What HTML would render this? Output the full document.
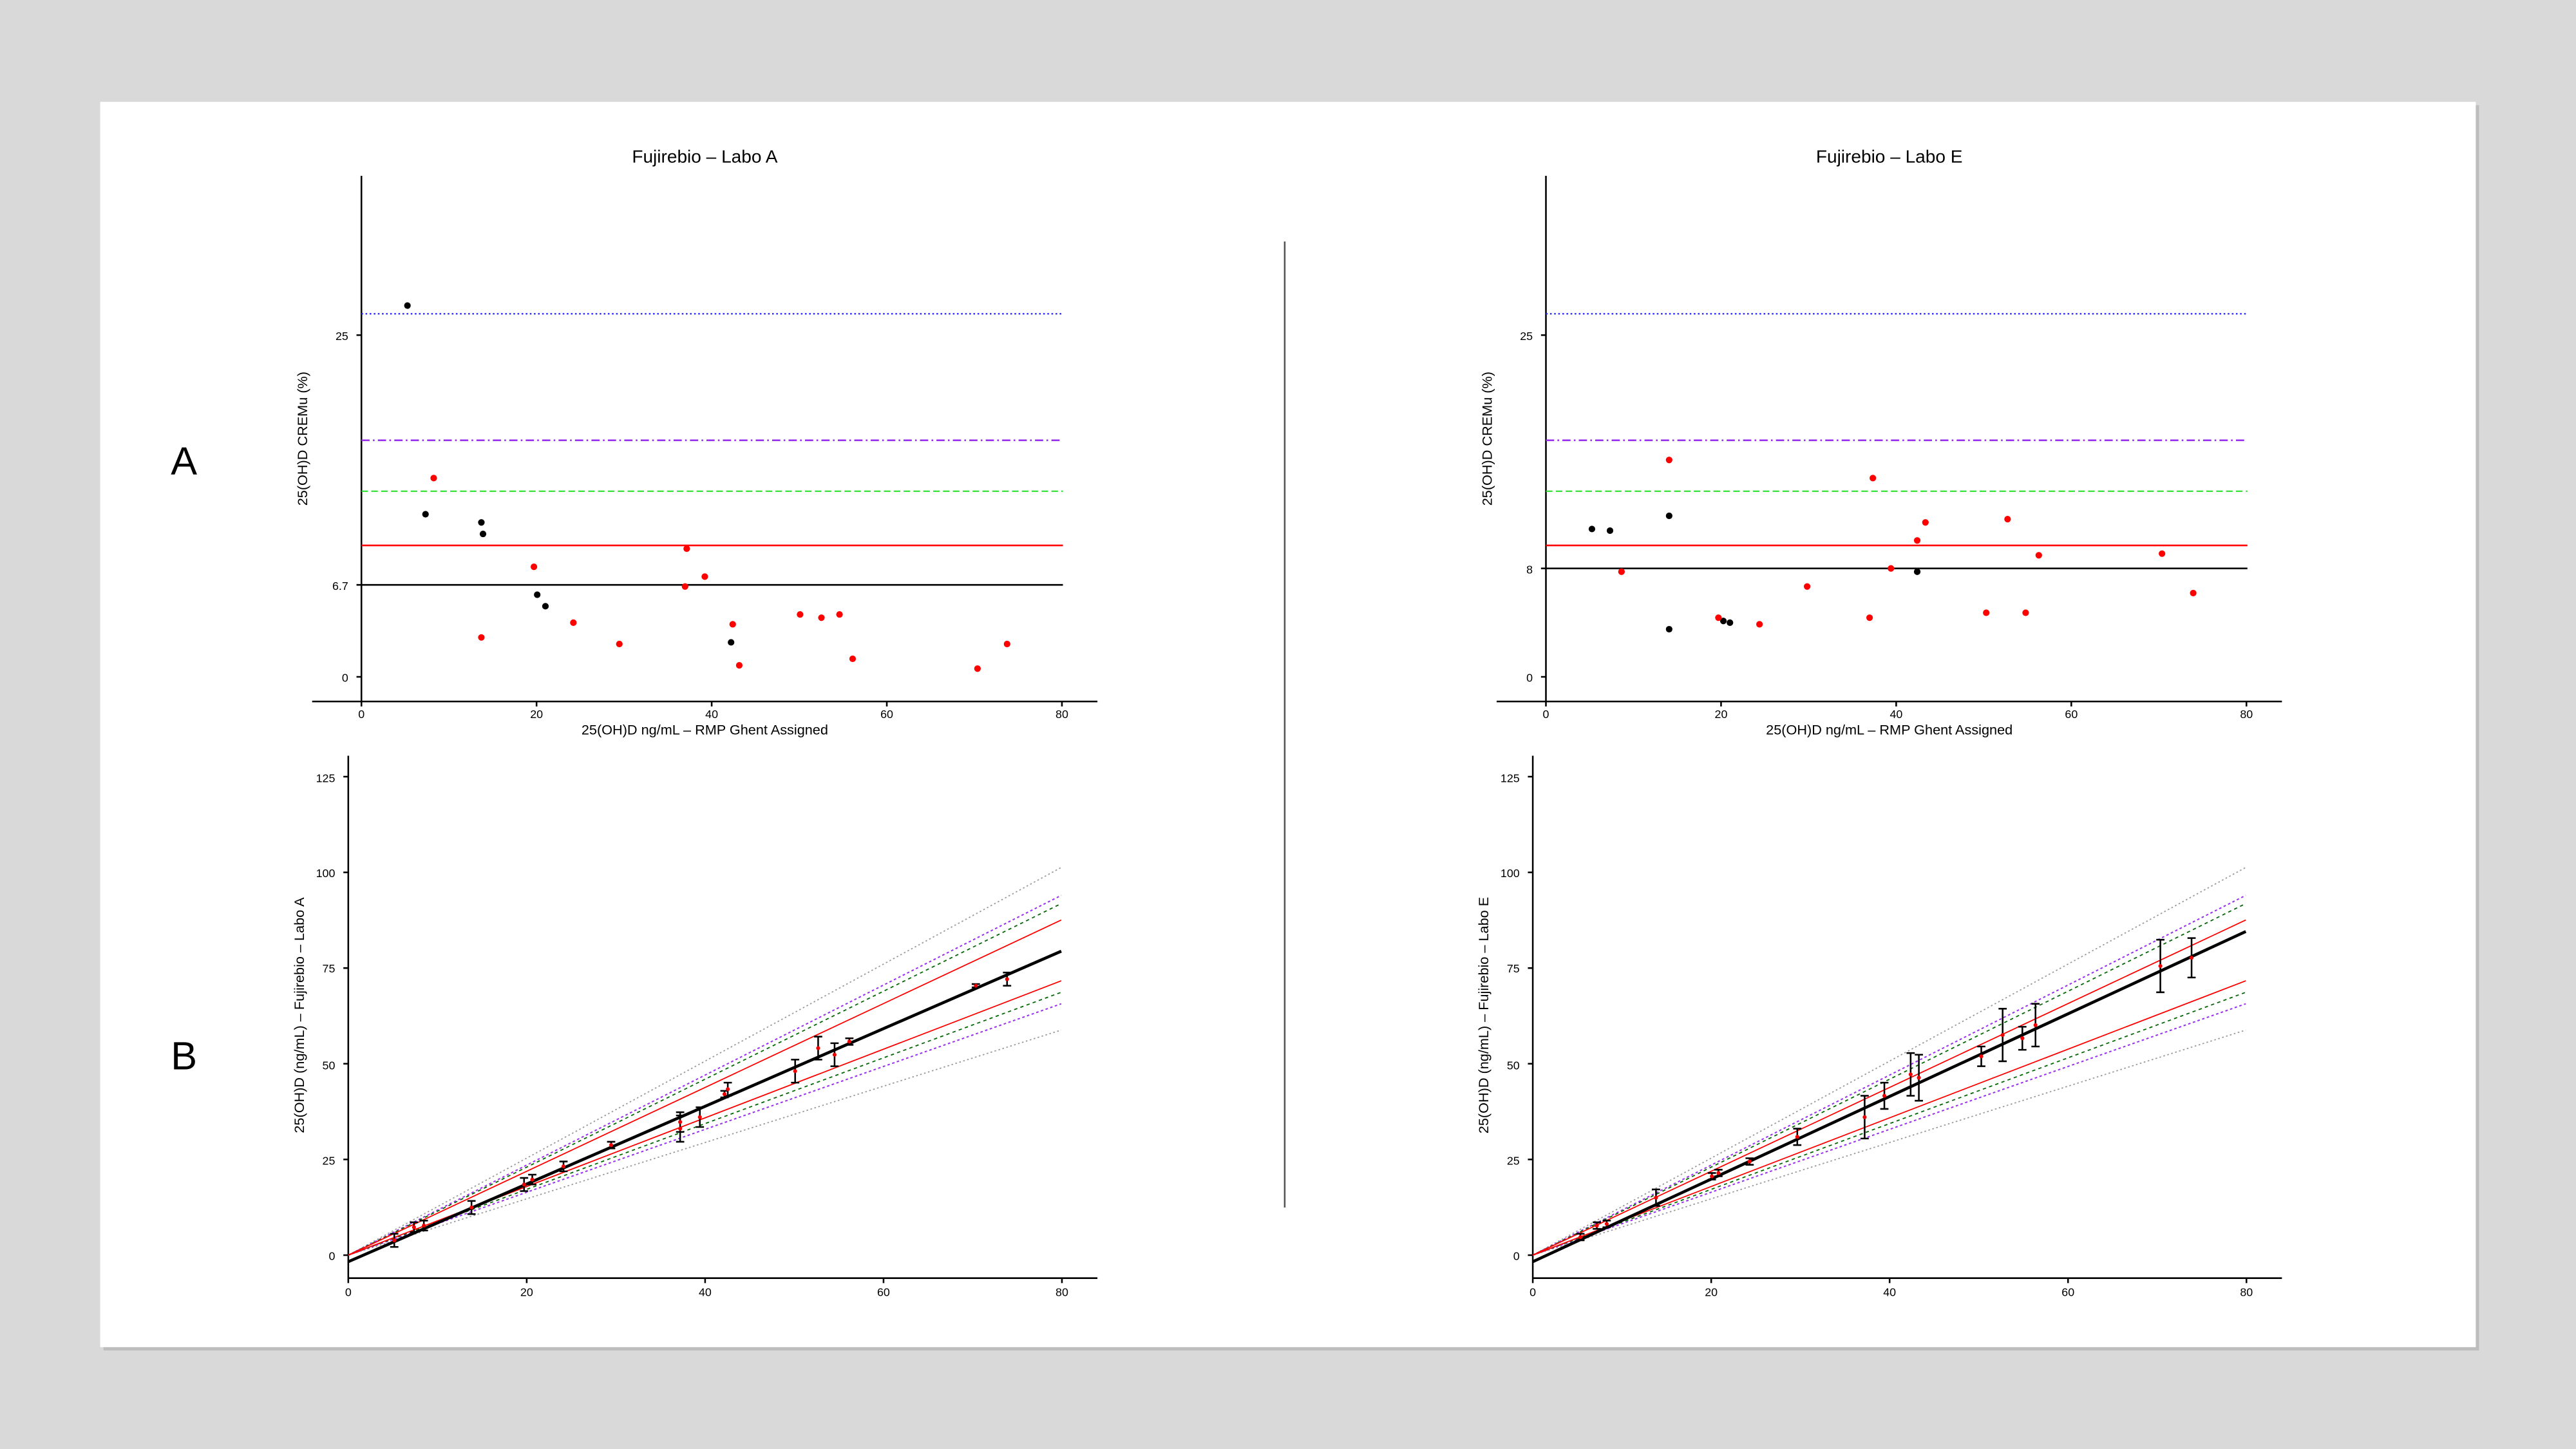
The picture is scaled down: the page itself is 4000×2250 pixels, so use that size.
<!DOCTYPE html>
<html><head><meta charset="utf-8"><style>
html,body{margin:0;padding:0;background:#d9d9d9;overflow:hidden}
svg{display:block}
text{font-family:"Liberation Sans",Arial,sans-serif;fill:#000}
</style></head><body>
<svg width="4000" height="2250" viewBox="0 0 1568 882" preserveAspectRatio="none" xmlns="http://www.w3.org/2000/svg">
<rect x="0" y="0" width="1568" height="882" fill="#d9d9d9"/>
<rect x="63" y="64" width="1446" height="758" fill="#bdbdbd"/>
<rect x="61" y="62" width="1446" height="758" fill="#fff"/>
<text x="104" y="289" font-size="24">A</text>
<text x="104" y="651" font-size="24">B</text>
<line x1="782" y1="147" x2="782" y2="735" stroke="#555" stroke-width="1"/>

<!-- TOP LEFT -->
<g font-size="7" text-anchor="middle">
<text x="429" y="99" font-size="11">Fujirebio – Labo A</text>
<text x="429" y="447" font-size="8.5">25(OH)D  ng/mL – RMP Ghent Assigned</text>
<text x="187" y="267" font-size="8.5" transform="rotate(-90 187 267)">25(OH)D  CREMu (%)</text>
<text x="220" y="437">0</text><text x="326.6" y="437">20</text><text x="433.2" y="437">40</text><text x="539.8" y="437">60</text><text x="646.4" y="437">80</text>
<text x="212" y="415" text-anchor="end">0</text><text x="212" y="207" text-anchor="end">25</text><text x="212" y="359" text-anchor="end">6.7</text>
</g>
<path d="M220 107V427M190 427H668M220 427v3M326.6 427v3M433.2 427v3M539.8 427v3M646.4 427v3M220 412h-3M220 204h-3M220 356h-3" stroke="#000" stroke-width="1" fill="none"/>
<line x1="220" y1="191" x2="647" y2="191" stroke="#3333ff" stroke-width="1" stroke-dasharray="1,1.5"/>
<line x1="220" y1="268" x2="647" y2="268" stroke="#9933ee" stroke-width="1" stroke-dasharray="5,2,1,2"/>
<line x1="220" y1="299" x2="647" y2="299" stroke="#22dd22" stroke-width="0.8" stroke-dasharray="4,2"/>
<line x1="220" y1="332" x2="647" y2="332" stroke="#f00" stroke-width="1"/>
<line x1="220" y1="356" x2="647" y2="356" stroke="#000" stroke-width="1"/>
<g fill="#000"><circle cx="248" cy="186" r="2"/><circle cx="259" cy="313" r="2"/><circle cx="293" cy="318" r="2"/><circle cx="294" cy="325" r="2"/><circle cx="327" cy="362" r="2"/><circle cx="332" cy="369" r="2"/><circle cx="445" cy="391" r="2"/></g>
<g fill="#f00"><circle cx="264" cy="291" r="2"/><circle cx="293" cy="388" r="2"/><circle cx="325" cy="345" r="2"/><circle cx="349" cy="379" r="2"/><circle cx="377" cy="392" r="2"/><circle cx="418" cy="334" r="2"/><circle cx="417" cy="357" r="2"/><circle cx="429" cy="351" r="2"/><circle cx="446" cy="380" r="2"/><circle cx="450" cy="405" r="2"/><circle cx="487" cy="374" r="2"/><circle cx="500" cy="376" r="2"/><circle cx="511" cy="374" r="2"/><circle cx="519" cy="401" r="2"/><circle cx="595" cy="407" r="2"/><circle cx="613" cy="392" r="2"/></g>

<!-- TOP RIGHT -->
<g font-size="7" text-anchor="middle">
<text x="1150" y="99" font-size="11">Fujirebio – Labo E</text>
<text x="1150" y="447" font-size="8.5">25(OH)D  ng/mL – RMP Ghent Assigned</text>
<text x="908" y="267" font-size="8.5" transform="rotate(-90 908 267)">25(OH)D  CREMu (%)</text>
<text x="941" y="437">0</text><text x="1047.6" y="437">20</text><text x="1154.2" y="437">40</text><text x="1260.8" y="437">60</text><text x="1367.4" y="437">80</text>
<text x="933" y="415" text-anchor="end">0</text><text x="933" y="207" text-anchor="end">25</text><text x="933" y="349" text-anchor="end">8</text>
</g>
<path d="M941 107V427M911 427H1389M941 427v3M1047.6 427v3M1154.2 427v3M1260.8 427v3M1367.4 427v3M941 412h-3M941 204h-3M941 346h-3" stroke="#000" stroke-width="1" fill="none"/>
<line x1="941" y1="191" x2="1368" y2="191" stroke="#3333ff" stroke-width="1" stroke-dasharray="1,1.5"/>
<line x1="941" y1="268" x2="1368" y2="268" stroke="#9933ee" stroke-width="1" stroke-dasharray="5,2,1,2"/>
<line x1="941" y1="299" x2="1368" y2="299" stroke="#22dd22" stroke-width="0.8" stroke-dasharray="4,2"/>
<line x1="941" y1="332" x2="1368" y2="332" stroke="#f00" stroke-width="1"/>
<line x1="941" y1="346" x2="1368" y2="346" stroke="#000" stroke-width="1"/>
<g fill="#000"><circle cx="969" cy="322" r="2"/><circle cx="980" cy="323" r="2"/><circle cx="1016" cy="314" r="2"/><circle cx="1016" cy="383" r="2"/><circle cx="1049" cy="378" r="2"/><circle cx="1053" cy="379" r="2"/><circle cx="1167" cy="348" r="2"/></g>
<g fill="#f00"><circle cx="1016" cy="280" r="2"/><circle cx="987" cy="348" r="2"/><circle cx="1046" cy="376" r="2"/><circle cx="1071" cy="380" r="2"/><circle cx="1100" cy="357" r="2"/><circle cx="1138" cy="376" r="2"/><circle cx="1140" cy="291" r="2"/><circle cx="1151" cy="346" r="2"/><circle cx="1167" cy="329" r="2"/><circle cx="1172" cy="318" r="2"/><circle cx="1209" cy="373" r="2"/><circle cx="1222" cy="316" r="2"/><circle cx="1233" cy="373" r="2"/><circle cx="1241" cy="338" r="2"/><circle cx="1316" cy="337" r="2"/><circle cx="1335" cy="361" r="2"/></g>

<!-- BOTTOM LEFT -->
<g font-size="7" text-anchor="middle">
<text x="185" y="618" font-size="8.5" transform="rotate(-90 185 618)">25(OH)D (ng/mL) – Fujirebio – Labo A</text>
<text x="212" y="789">0</text><text x="320.6" y="789">20</text><text x="429.2" y="789">40</text><text x="537.8" y="789">60</text><text x="646.4" y="789">80</text>
<g text-anchor="end"><text x="204" y="767">0</text><text x="204" y="709">25</text><text x="204" y="651">50</text><text x="204" y="592">75</text><text x="204" y="534">100</text><text x="204" y="476">125</text></g>
</g>
<path d="M212 460V778M212 778H668M212 778v3M320.6 778v3M429.2 778v3M537.8 778v3M646.4 778v3M212 764h-3M212 705.75h-3M212 647.5h-3M212 589.25h-3M212 531h-3M212 472.75h-3" stroke="#000" stroke-width="1" fill="none"/>
<g fill="none">
<path d="M212 764L646 528M212 764L646 627" stroke="#999" stroke-width="0.7" stroke-dasharray="1,1.5"/>
<path d="M212 764L646 545M212 764L646 611" stroke="#9933ee" stroke-width="0.8" stroke-dasharray="1.5,1.5"/>
<path d="M212 764L646 550M212 764L646 604" stroke="#006600" stroke-width="0.7" stroke-dasharray="2,2"/>
<path d="M212 764L646 560M212 764L646 597" stroke="#f00" stroke-width="0.7"/>
<path d="M212 768L646 579" stroke="#000" stroke-width="1.8"/>
<path stroke="#000" stroke-width="1" d="M237.5 751H242.5M240 751V759M237.5 759H242.5M249.5 744H254.5M252 744V750M249.5 750H254.5M255.5 743H260.5M258 743V749M255.5 749H260.5M284.5 731H289.5M287 731V739M284.5 739H289.5M316.5 717H321.5M319 717V725M316.5 725H321.5M321.5 715H326.5M324 715V721M321.5 721H326.5M340.5 707H345.5M343 707V713M340.5 713H345.5M369.5 695H374.5M372 695V699M369.5 699H374.5M411.5 677H416.5M414 677V689M411.5 689H416.5M411.5 679H416.5M414 679V695M411.5 695H416.5M423.5 674H428.5M426 674V686M423.5 686H428.5M438.5 664H443.5M441 664V668M438.5 668H443.5M440.5 659H445.5M443 659V667M440.5 667H445.5M481.5 645H486.5M484 645V659M481.5 659H486.5M495.5 631H500.5M498 631V645M495.5 645H500.5M505.5 635H510.5M508 635V649M505.5 649H510.5M514.5 632H519.5M517 632V636M514.5 636H519.5M591.5 599H596.5M594 599V601M591.5 601H596.5M610.5 592H615.5M613 592V600M610.5 600H615.5"/>
</g>
<g fill="#e00"><circle cx="240" cy="755" r="1.2"/><circle cx="252" cy="747" r="1.2"/><circle cx="258" cy="746" r="1.2"/><circle cx="287" cy="735" r="1.2"/><circle cx="319" cy="721" r="1.2"/><circle cx="324" cy="718" r="1.2"/><circle cx="343" cy="710" r="1.2"/><circle cx="372" cy="697" r="1.2"/><circle cx="414" cy="683" r="1.2"/><circle cx="414" cy="687" r="1.2"/><circle cx="426" cy="680" r="1.2"/><circle cx="441" cy="666" r="1.2"/><circle cx="443" cy="663" r="1.2"/><circle cx="484" cy="652" r="1.2"/><circle cx="498" cy="638" r="1.2"/><circle cx="508" cy="642" r="1.2"/><circle cx="517" cy="634" r="1.2"/><circle cx="594" cy="600" r="1.2"/><circle cx="613" cy="596" r="1.2"/></g>

<!-- BOTTOM RIGHT -->
<g font-size="7" text-anchor="middle">
<text x="906" y="618" font-size="8.5" transform="rotate(-90 906 618)">25(OH)D (ng/mL) – Fujirebio – Labo E</text>
<text x="933" y="789">0</text><text x="1041.6" y="789">20</text><text x="1150.2" y="789">40</text><text x="1258.8" y="789">60</text><text x="1367.4" y="789">80</text>
<g text-anchor="end"><text x="925" y="767">0</text><text x="925" y="709">25</text><text x="925" y="651">50</text><text x="925" y="592">75</text><text x="925" y="534">100</text><text x="925" y="476">125</text></g>
</g>
<path d="M933 460V778M933 778H1389M933 778v3M1041.6 778v3M1150.2 778v3M1258.8 778v3M1367.4 778v3M933 764h-3M933 705.75h-3M933 647.5h-3M933 589.25h-3M933 531h-3M933 472.75h-3" stroke="#000" stroke-width="1" fill="none"/>
<g fill="none">
<path d="M933 764L1367 528M933 764L1367 627" stroke="#999" stroke-width="0.7" stroke-dasharray="1,1.5"/>
<path d="M933 764L1367 545M933 764L1367 611" stroke="#9933ee" stroke-width="0.8" stroke-dasharray="1.5,1.5"/>
<path d="M933 764L1367 550M933 764L1367 604" stroke="#006600" stroke-width="0.7" stroke-dasharray="2,2"/>
<path d="M933 764L1367 560M933 764L1367 597" stroke="#f00" stroke-width="0.7"/>
<path d="M933 768L1367 567" stroke="#000" stroke-width="1.8"/>
<path stroke="#000" stroke-width="1" d="M959.5 751H964.5M962 751V755M959.5 755H964.5M969.5 744H974.5M972 744V748M969.5 748H974.5M975.5 743H980.5M978 743V747M975.5 747H980.5M1005.5 724H1010.5M1008 724V734M1005.5 734H1010.5M1039.5 714H1044.5M1042 714V718M1039.5 718H1044.5M1043.5 712H1048.5M1046 712V716M1043.5 716H1048.5M1062.5 705H1067.5M1065 705V709M1062.5 709H1067.5M1091.5 687H1096.5M1094 687V697M1091.5 697H1096.5M1132.5 667H1137.5M1135 667V693M1132.5 693H1137.5M1144.5 659H1149.5M1147 659V675M1144.5 675H1149.5M1160.5 641H1165.5M1163 641V667M1160.5 667H1165.5M1165.5 642H1170.5M1168 642V670M1165.5 670H1170.5M1203.5 637H1208.5M1206 637V649M1203.5 649H1208.5M1216.5 614H1221.5M1219 614V646M1216.5 646H1221.5M1228.5 625H1233.5M1231 625V639M1228.5 639H1233.5M1236.5 611H1241.5M1239 611V637M1236.5 637H1241.5M1312.5 572H1317.5M1315 572V604M1312.5 604H1317.5M1331.5 571H1336.5M1334 571V595M1331.5 595H1336.5"/>
</g>
<g fill="#e00"><circle cx="962" cy="753" r="1.2"/><circle cx="972" cy="746" r="1.2"/><circle cx="978" cy="745" r="1.2"/><circle cx="1008" cy="729" r="1.2"/><circle cx="1042" cy="716" r="1.2"/><circle cx="1046" cy="714" r="1.2"/><circle cx="1065" cy="707" r="1.2"/><circle cx="1094" cy="692" r="1.2"/><circle cx="1135" cy="680" r="1.2"/><circle cx="1147" cy="667" r="1.2"/><circle cx="1163" cy="654" r="1.2"/><circle cx="1168" cy="656" r="1.2"/><circle cx="1206" cy="643" r="1.2"/><circle cx="1219" cy="630" r="1.2"/><circle cx="1231" cy="632" r="1.2"/><circle cx="1239" cy="624" r="1.2"/><circle cx="1315" cy="588" r="1.2"/><circle cx="1334" cy="583" r="1.2"/></g>
</svg>
</body></html>
